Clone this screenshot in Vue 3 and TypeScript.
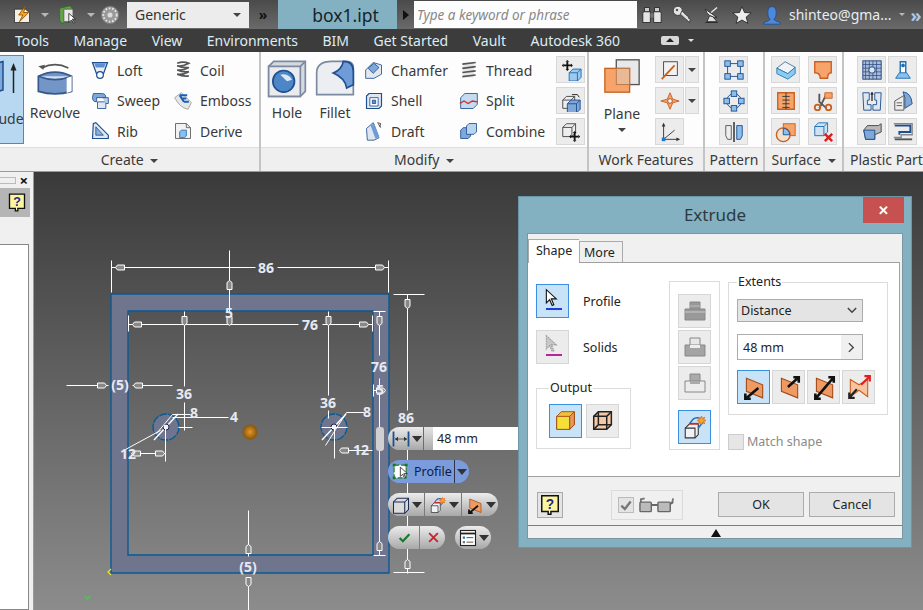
<script setup lang="ts">
type Tool = { label: string; icon: string };

const B = "#1d4f91";
const box = (x: number, y: number, s: number, fill = "#e4e8ee", stroke = B) =>
  `<path d="M${x} ${y + 4}l4-4h${s}v${s}l-4 4h-${s}z" fill="${fill}" stroke="${stroke}"/><path d="M${x} ${y + 4}h${s}v${s}M${x + s} ${y + 4}l4-4" fill="none" stroke="${stroke}"/>`;
const move = (x: number, y: number) =>
  `<path d="M${x - 4} ${y}h8M${x} ${y - 4}v8" stroke="#111" stroke-width="2"/><path d="M${x - 6} ${y}l2-2v4zM${x + 6} ${y}l-2-2v4zM${x} ${y - 6}l-2 2h4zM${x} ${y + 6}l-2-2h4z" fill="#111"/>`;
const arrowPair = (fill: string, line: string, d: string) =>
  `<path d="M5 4l15 6v12L5 16z" fill="${fill}" stroke="#a24b17"/><path d="${d}" stroke="${line}" stroke-width="2.400" fill="none"/>`;

const icons: Record<string, string> = {
  extrude: `<path d="M-3 3L4 1V20L-3 22z" fill="#7fa8d8" stroke="${B}"/><path d="M11 22V5" stroke="#222" stroke-width="1"/><path d="M11 2l-2 5h4z" fill="#222"/>`,
  revolve: `<path d="M4 6q8-4 16 0" fill="none" stroke="#555"/><path d="M2 5l4-1-1 3z" fill="#555"/><path d="M2 11q10-5 20 0v9q-10 3-20 0z" fill="#7396c6" stroke="#36588f"/><path d="M2 11q10 4 20 0" fill="#cfe0f0" stroke="#36588f"/><path d="M19 12l3-1v9l-3 1z" fill="#fff"/>`,
  loft: `<path d="M3 3h18l-5 14H8z" fill="#e8eef5" stroke="${B}" stroke-width="1.5"/><path d="M5 4h14l-2 5H7z" fill="#5f8fd0"/><circle cx="12" cy="18" r="4" fill="#fff" stroke="${B}" stroke-width="1.5"/>`,
  sweep: `<path d="M4 3h10q5 0 5 5H8v5q-5 0-5-5z" fill="#7fa8d8" stroke="${B}"/><path d="M9 13h10v8H9z" fill="#dfe7f1" stroke="${B}"/><path d="M15 8h7v7h-3" fill="#b8cee8" stroke="${B}"/>`,
  rib: `<path d="M4 3l3-1 15 15v4H3z" fill="#dfe7f1" stroke="${B}" stroke-width="1.4"/><path d="M7 7l9 10H7z" fill="#8fb0dc" stroke="${B}"/>`,
  coil: `<path d="M5 4q7-3 14 0-7 4-14 3 7 3 14 2-7 4-14 3 7 3 14 2-7 4-14 3 7 3 14 2" fill="none" stroke="#555" stroke-width="2"/>`,
  emboss: `<path d="M2 8l8-6 12 12-4 8q-10-2-16-14z" fill="#e6e6e6" stroke="#999"/><path d="M8 5h9M8 5l5 8M10 9h6M13 13h6" stroke="#1561b8" stroke-width="2.4"/>`,
  derive: `<path d="M3 3h13l5 5v13H3z" fill="#f2f2f2" stroke="#555"/><path d="M16 3v5h5" fill="none" stroke="#555"/><path d="M8 13l2-2h6v7l-2 2H8z" fill="#8cc0ea" stroke="#1a6fb5"/>`,
  hole: `<path d="M1 5l3-3h19v18l-3 3H1z" fill="#d6d9de" stroke="#7b8aa0"/><path d="M1 5h19v18H1z" fill="#e9ebee" stroke="#7b8aa0"/><path d="M20 5l3-3" stroke="#7b8aa0"/><circle cx="10" cy="14" r="6.5" fill="#4d86c6" stroke="${B}"/><path d="M8 10a6 6 0 0 1 7 3l-3 1z" fill="#d9e8f5"/>`,
  fillet: `<path d="M1 22V9q0-7 9-7h9q4 0 4 4v16z" fill="#eceef1" stroke="#7b8aa0"/><path d="M11 9q5-2 6-7 6 0 6 6v8l-4 2q-1-6-8-9z" fill="#6f9bd6" stroke="${B}"/>`,
  chamfer: `<path d="M2 12l9-9 10 3v11l-9 5H2z" fill="#e4e8ee" stroke="${B}"/><path d="M5 10l7-6 6 5-7 7z" fill="#7fa8d8" stroke="${B}"/>`,
  shell: `<path d="M3 6l3-3h15v15l-3 3H3z" fill="#dfe6f0" stroke="${B}" stroke-width="1.4"/><path d="M7 8h10v10H7z" fill="#fff" stroke="${B}"/><path d="M10 11h4v4h-4z" fill="#5f8fd0" stroke="${B}"/>`,
  draft: `<path d="M3 9l8-7 7 18-6 3H4z" fill="#dfe6f0" stroke="${B}"/><path d="M10 4l6 16" stroke="#6f9bd6" stroke-width="5"/><path d="M17 3l3 5M16 2l4 1-1 4" fill="none" stroke="#333"/>`,
  thread: `<path d="M5 3h13v18H5z" fill="#e8e8e8"/><path d="M4 5l16-2M4 10l16-2M4 15l16-2M4 20l16-2" stroke="#555" stroke-width="2"/>`,
  split: `<path d="M2 8l5-5h15v13l-5 5H2z" fill="#c5dbf0" stroke="${B}"/><path d="M1 15l5-3 5 3 5-3 6 1" fill="none" stroke="#cf2e2e" stroke-width="1.6"/>`,
  combine: `<path d="M2 11l3-3h9v10l-3 3H2z" fill="#7fa8d8" stroke="${B}"/><path d="M9 6l3-3h9v10l-3 3H9z" fill="#b8d4ee" stroke="${B}"/>`,
  mvface: `${move(8, 7)}${box(10, 11, 9, "#9cc9ee", "#1a6fb5")}`,
  copy: `${box(3, 7, 9, "#eee", "#444")}${box(8, 11, 10, "#7fa8d8", B)}<path d="M13 5h6l2 3" fill="none" stroke="#222"/>`,
  move3: `${box(3, 3, 10, "#eee", "#444")}${move(16, 17)}`,
  plane: `<rect x="15" y="3" width="24" height="26" fill="#e8e8ea" stroke="#555" stroke-width="1.4"/><rect x="3" y="12" width="26" height="25" fill="#f7a46b" stroke="#c8601f" stroke-width="1.4"/><rect x="15" y="12" width="14" height="17" fill="#e9b996" stroke="#b6774a"/>`,
  axis: `<rect x="5" y="3" width="15" height="15" fill="#f2f2f2" stroke="#444"/><path d="M3 22L17 7" stroke="#c8601f" stroke-width="2"/>`,
  point: `<path d="M12 3l3 7 7 2-7 2-3 7-3-7-7-2 7-2z" fill="#f7a46b" stroke="#c8601f"/><circle cx="12" cy="12" r="2.5" fill="#fff" stroke="#a24b17"/>`,
  ucs: `<path d="M5 3v17h17M5 20l12-10" fill="none" stroke="#333"/><path d="M3 6l2-4 2 4zM19 18l4 2-4 2z" fill="#333"/><rect x="3" y="18" width="4" height="4" fill="#2278c8"/>`,
  rect: `<path d="M5 5h14M5 19h14M5 5v14M19 5v14" stroke="${B}"/><rect x="2" y="2" width="6" height="6" fill="#8cc0ea" stroke="${B}"/><rect x="16" y="2" width="6" height="6" fill="#8cc0ea" stroke="${B}"/><rect x="2" y="16" width="6" height="6" fill="#8cc0ea" stroke="${B}"/><rect x="16" y="16" width="6" height="6" fill="#8cc0ea" stroke="${B}"/>`,
  circ: `<circle cx="12" cy="12" r="8" fill="none" stroke="${B}"/><rect x="9" y="1" width="6" height="6" fill="#8cc0ea" stroke="${B}"/><rect x="1" y="9" width="6" height="6" fill="#8cc0ea" stroke="${B}"/><rect x="17" y="9" width="6" height="6" fill="#8cc0ea" stroke="${B}"/><rect x="9" y="17" width="6" height="6" fill="#8cc0ea" stroke="${B}"/>`,
  mirror: `<path d="M12 1v22" stroke="#222" stroke-width="1.5"/><path d="M3 5h6v15H5l-2-4z" fill="#eee" stroke="#555"/><path d="M21 5h-6v15h4l2-4z" fill="#8cc0ea" stroke="${B}"/>`,
  thicken: `<path d="M2 10l9-7 11 6-8 7z" fill="#f0f4f8" stroke="#48789f"/><path d="M2 10v6l12 6 8-6v-7l-8 7z" fill="#8ccbee" stroke="#2b7fb8"/>`,
  patch: `<path d="M3 3h18v12q-4 0-4 6H9q0-6-6-6z" fill="#f7a46b" stroke="#c8601f" stroke-width="1.5"/>`,
  stitch: `<path d="M3 3h18v18H3z" fill="#f7a46b" stroke="#c8601f" stroke-width="1.5"/><path d="M12 3v18M8 7h8M8 11h8M8 15h8M8 19h8" stroke="#333"/>`,
  trim: `<path d="M8 4v9l8 7M16 4l-8 16" stroke="#555" stroke-width="2" fill="none"/><circle cx="6" cy="19" r="3" fill="none" stroke="#c8601f" stroke-width="2"/><circle cx="18" cy="19" r="3" fill="none" stroke="#c8601f" stroke-width="2"/><path d="M14 3h8v6h-8z" fill="#f7a46b" stroke="#c8601f"/>`,
  sculpt: `<rect x="9" y="3" width="13" height="13" fill="#f7a46b" stroke="#c8601f"/><circle cx="9" cy="15" r="7.5" fill="#f2e0d0" stroke="#c8601f" stroke-width="1.5"/><path d="M9 8a7 7 0 0 1 7 7H9z" fill="#8cc0ea" stroke="${B}"/>`,
  delface: `${box(3, 2, 10, "#cfe2f3", "#1a6fb5")}<path d="M14 14l8 8M22 14l-8 8" stroke="#d82222" stroke-width="2.6"/>`,
  grill: `<rect x="2" y="2" width="20" height="20" fill="#a9bdd8" stroke="#1d3f78"/><path d="M5 2v20M9 2v20M13 2v20M17 2v20M2 6h20M2 10h20M2 14h20M2 18h20" stroke="#2a4a85" stroke-width=".8"/><circle cx="12" cy="12" r="3.5" fill="#dbe6f2" stroke="#1d3f78"/>`,
  boss: `<path d="M9 3h6v13H9z" fill="#fff" stroke="#1a6fb5" stroke-width="1.5"/><path d="M4 21h16l-4-6H8z" fill="#8cc0ea" stroke="#1a6fb5"/><circle cx="12" cy="7" r="2" fill="#1a6fb5"/>`,
  lip: `<path d="M2 3h7v8H7v5h4v6H3zM22 3h-7v8h2v5h-4v6h8z" fill="#dfe6f0" stroke="${B}"/><path d="M12 12V3" stroke="#222" stroke-width="1.4"/><path d="M10 5l2-3 2 3z" fill="#222"/>`,
  rest: `<path d="M12 2q9 1 10 13l-8 5V8z" fill="#7fa8d8" stroke="${B}"/><path d="M3 12l10-6v16H3z" fill="#eee" stroke="#555"/><path d="M5 14h6M5 17h6" stroke="#555"/>`,
  snapfit: `<path d="M3 10l4-5h12l3-2v9l-7 3v5H5z" fill="#b8b8b8" stroke="#444"/><path d="M3 10h12v10H5z" fill="#7fa8d8" stroke="${B}"/>`,
  rule: `<path d="M2 3h20v12H10v3H2" fill="none" stroke="#888" stroke-width="1.5"/><path d="M3 5h17v7H8v3" fill="none" stroke="${B}" stroke-width="2"/><path d="M3 20h19" stroke="#555" stroke-width="2"/>`,
  bolt: `<path d="M3 5h13l5 4v12H3z" fill="#f3efe3" stroke="#333"/><path d="M16 1L8 12h5l-4 8 11-11h-6z" fill="#f5a623" stroke="#8a4b00"/>`,
  file: `<path d="M2 4l12-3 3 3v15l-12 3-3-3z" fill="#62a24a" stroke="#2f6a22"/><path d="M7 5h11v15H7z" fill="#e8e8e8" stroke="#555"/><path d="M13 10v11l3-3 3 4 1-1-3-4h4z" fill="#fff" stroke="#222"/>`,
  disc: `<circle cx="12" cy="12" r="10.5" fill="#999" stroke="#777"/><circle cx="12" cy="12" r="8" fill="none" stroke="#e8e8e8" stroke-width="2.2" stroke-dasharray="2 2"/><circle cx="12" cy="12" r="3" fill="#ddd"/>`,
  binoc: `<path d="M2 8h8v13H1V10zM14 8h8l1 2v11h-9z" fill="#e6e6e6" stroke="#222"/><path d="M3 3h6v5H3zM15 3h6v5h-6z" fill="#ccc" stroke="#222"/><path d="M10 10h4v5h-4z" fill="#777"/>`,
  key: `<circle cx="7" cy="7" r="5.5" fill="#e4e4e4" stroke="#333"/><path d="M10 11l11 10 1-4-2-1 0-2-2-1-6-6z" fill="#ddd" stroke="#333"/><circle cx="6" cy="6" r="1.5" fill="#555"/>`,
  dish: `<path d="M4 5q3 10 14 10z" fill="#eee" stroke="#222"/><path d="M11 9l7-6" stroke="#eee" stroke-width="1.5"/><path d="M9 13l-3 7h12l-5-6zM4 21h15" fill="#ddd" stroke="#222"/>`,
  star: `<path d="M12 2l3 7 8 .5-6 5 2 7.5-7-4-7 4 2-7.5-6-5 8-.5z" fill="#eee" stroke="#222"/>`,
  user: `<path d="M12 2q5 0 5 7t-3 8q1 2 8 4v2H2v-2q7-2 8-4-3-1-3-8t5-7z" fill="#4d88dc" stroke="#1d4f91"/>`,
  cursor: `<path d="M4 2v16l4-4 3 7 2-1-3-7h6z" fill="#fff" stroke="#111" stroke-width="1.3"/>`,
  cursorDim: `<path d="M4 2v16l4-4 3 7 2-1-3-7h6z" fill="#c8c8c8" stroke="#999" stroke-width="1.3" stroke-dasharray="2 1"/>`,
  solid: `<path d="M4 9l5-5h14v14l-5 5H4z" fill="#f0c23a" stroke="#a24b17"/><path d="M4 9h14v14H4z" fill="#f7df3a" stroke="#a24b17"/><path d="M18 9l5-5v14l-5 5z" fill="#e69a55" stroke="#a24b17"/>`,
  surf: `<path d="M4 9l5-5h14v14l-5 5H4z" fill="#f5c9a5" stroke="#222" stroke-width="1.6"/><path d="M9 4v14h14M9 18l-5 5M4 9h14v14M18 9l5-5" fill="none" stroke="#222" stroke-width="1.6"/>`,
  press1: `<path d="M8 2h10v9H8z" fill="#999" stroke="#888"/><path d="M8 6h10" stroke="#bbb"/><path d="M3 9h20v11H3z" fill="#999" stroke="#888"/><path d="M3 12h20" stroke="#ccc"/>`,
  press2: `<path d="M8 2h10v9H8z" fill="#e8e8e8" stroke="#888"/><path d="M3 9h20v11H3z" fill="#a4a4a4" stroke="#888"/><path d="M8 9h10v3H8z" fill="#eee"/>`,
  press3: `<path d="M8 2h10v9H8z" fill="#aaa" stroke="#888"/><path d="M3 9h20v11H3z" fill="#ececec" stroke="#888"/><path d="M8 9h10v3H8z" fill="#aaa"/>`,
  iso: `<path d="M3 13l4-4h8v10l-3 3H3z" fill="#f0f2f5" stroke="#333"/><path d="M3 13h9v9" fill="none" stroke="#333"/><path d="M7 9l3-4q4-3 8 0l1 3-4 5" fill="none" stroke="#1a6fb5" stroke-width="1.4"/><path d="M7 9h8" stroke="#e02020" stroke-width="1.6"/><path d="M18 2l1 2 2-1-1 2 2 1-2 1 1 2-2-1-1 2-1-2-2 1 1-2-2-1 2-1-1-2 2 1z" fill="#f5a623" stroke="#d4521a" stroke-width=".6"/>`,
  dir1: arrowPair("#ef9a63", "#111", "M16 13L4 23M4 18v5h5"),
  dir2: arrowPair("#ef9a63", "#111", "M11 12L21 3M16 3h5v5"),
  dir3: arrowPair("#ef9a63", "#111", "M4 23L21 3M4 18v5h5M16 3h5v5"),
  dir4: `<path d="M4 5l8 5 8-5v16l-8-6-8 6z" fill="#f7c4a0" stroke="#c8601f"/><path d="M14 10l8-8M17 2h5v5" stroke="#e02020" stroke-width="2" fill="none"/><path d="M10 14l-7 8M3 17v5h5" stroke="#222" stroke-width="2" fill="none"/>`,
  glasses: `<path d="M2 6v-3l4-1M36 2l-1 5" fill="none" stroke="#777" stroke-width="2"/><rect x="1" y="6" width="12" height="10" rx="1" fill="#bbb" stroke="#666" stroke-width="1.5"/><rect x="20" y="6" width="13" height="10" rx="1" fill="#bbb" stroke="#666" stroke-width="1.5"/><path d="M13 9h7M33 8l3-2" stroke="#666" stroke-width="2"/>`,
  help: `<path d="M3 2h18v17h-8v3h-3v-3H3z" fill="#fdf6a0" stroke="#111" stroke-width="1.6"/><text x="12" y="16" text-anchor="middle" font-family="Liberation Sans" font-weight="700" font-size="15" fill="#25258a">?</text>`,
  dim: `<path d="M2 2v20M22 2v20" stroke="${B}" stroke-width="2.4"/><path d="M4 12h16" stroke="#333"/><path d="M4 12l4-3v6zM20 12l-4-3v6z" fill="#333"/>`,
  profile: `<rect x="3" y="3" width="17" height="18" fill="#fff" stroke="#177a17" stroke-width="1.5" stroke-dasharray="7 3"/><rect x="1" y="1" width="4" height="4" fill="#177a17"/><rect x="18" y="1" width="4" height="4" fill="#177a17"/><rect x="1" y="19" width="4" height="4" fill="#177a17"/>`,
  opface: `<path d="M2 8l5-5h15v15l-5 5H2z" fill="#dcdcdc" stroke="#1c2d54" stroke-width="1.4"/><path d="M2 8h15v15M17 8l5-5" fill="none" stroke="#1c2d54" stroke-width="1.4"/>`,
  check: `<path d="M3 13l6 6L21 6" fill="none" stroke="#177a2c" stroke-width="4"/>`,
  cross: `<path d="M4 4l16 16M20 4L4 20" stroke="#c8232c" stroke-width="3.4"/>`,
  list: `<rect x="2" y="2" width="20" height="20" fill="#fff" stroke="#222" stroke-width="1.5"/><path d="M2 6h20" stroke="#222" stroke-width="2.4"/><rect x="5" y="10" width="3" height="3" fill="#2278c8"/><rect x="5" y="16" width="3" height="3" fill="#777"/><path d="M10 11.500h9M10 17.500h9" stroke="#222"/>`,
};

const createCol1: Tool[] = [
  { label: "Loft", icon: "loft" },
  { label: "Sweep", icon: "sweep" },
  { label: "Rib", icon: "rib" },
];
const createCol2: Tool[] = [
  { label: "Coil", icon: "coil" },
  { label: "Emboss", icon: "emboss" },
  { label: "Derive", icon: "derive" },
];
const modifyCol1: Tool[] = [
  { label: "Chamfer", icon: "chamfer" },
  { label: "Shell", icon: "shell" },
  { label: "Draft", icon: "draft" },
];
const modifyCol2: Tool[] = [
  { label: "Thread", icon: "thread" },
  { label: "Split", icon: "split" },
  { label: "Combine", icon: "combine" },
];
const modifyBtns = ["mvface", "copy", "move3"];
const patternBtns = ["rect", "circ", "mirror"];
const surfaceBtns = ["thicken", "patch", "stitch", "trim", "sculpt", "delface"];
const plasticBtns = ["grill", "boss", "lip", "rest", "snapfit", "rule"];
const menus = ["Tools", "Manage", "View", "Environments", "BIM", "Get Started", "Vault", "Autodesk 360"];
const topIcons = ["binoc", "key", "dish", "star", "user"];
const dirIcons = ["dir1", "dir2", "dir3", "dir4"];

// white sketch dimensions, in page coordinates
const dimLines = [
  "M111 260V292M388 260V292M111 267H255M277 267H388",
  "M229 250V311M128 315V331M372 315V331M128 324H298M322 324H372",
  "M184 311V386M328 311V395M184 402V430M328 410V418",
  "M379 311V355M379 378V555M373 311H385M373 555H385M373 384V396M373 390H376",
  "M393 294H424M393 572H424M407 294V410M407 428V573",
  "M66 385H108M132 385H172",
  "M248 510V556M248 578V610",
  "M172 414H190M172 417H228M178 427H192M165 427V461M135 453H165M125 449L160 430M156 433L172 414",
  "M334 427V458M340 450H350M340 450H372M364 412H346L325 445M321 427H347",
];
const arrows = [
  { x: 120, y: 267, r: 0 }, { x: 379, y: 267, r: 180 }, { x: 229, y: 285, r: 90 }, { x: 229, y: 320, r: -90 },
  { x: 137, y: 324, r: 0 }, { x: 363, y: 324, r: 180 }, { x: 184, y: 320, r: -90 }, { x: 328, y: 320, r: -90 },
  { x: 379, y: 320, r: -90 }, { x: 379, y: 546, r: 90 }, { x: 407, y: 303, r: -90 }, { x: 407, y: 564, r: 90 },
  { x: 101, y: 385, r: 180 }, { x: 138, y: 385, r: 0 }, { x: 248, y: 549, r: 90 }, { x: 248, y: 581, r: -90 },
  { x: 159, y: 453, r: 180 }, { x: 136, y: 453, r: 0 }, { x: 344, y: 450, r: 0 }, { x: 380, y: 390, r: 180 },
];
const labels = [
  { t: "86", x: 266, y: 273 }, { t: "5", x: 229, y: 318 }, { t: "76", x: 310, y: 330 }, { t: "76", x: 379, y: 372 },
  { t: "5", x: 380, y: 395 }, { t: "86", x: 406, y: 423 }, { t: "36", x: 184, y: 399 }, { t: "36", x: 328, y: 408 },
  { t: "8", x: 194, y: 418 }, { t: "4", x: 234, y: 422 }, { t: "8", x: 367, y: 417 }, { t: "12", x: 128, y: 459 },
  { t: "12", x: 361, y: 455 }, { t: "(5)", x: 120, y: 390 }, { t: "(5)", x: 248, y: 572 },
];
</script>

<template>
  <div class="app">
    <header class="titlebar">
      <svg class="ti first" viewBox="0 0 24 24" v-html="icons.bolt"></svg>
      <i class="caret"></i>
      <svg class="ti" viewBox="0 0 24 24" v-html="icons.file"></svg>
      <i class="caret"></i>
      <svg class="ti disc" viewBox="0 0 24 24" v-html="icons.disc"></svg>
      <div class="generic"><span>Generic</span><i class="caret dark"></i></div>
      <div class="more-btn">»</div>
      <div class="doc-tab">box1.ipt</div>
      <div class="play-btn"></div>
      <div class="search">Type a keyword or phrase</div>
      <div class="top-icons">
        <svg v-for="name in topIcons" :key="name" viewBox="0 0 24 24" v-html="icons[name]"></svg>
      </div>
      <span class="account">shinteo@gma...</span>
      <i class="caret"></i>
      <span class="more-right">»</span>
    </header>

    <nav class="menubar">
      <span v-for="m in menus" :key="m">{{ m }}</span>
      <span class="ribbon-toggle"><b></b></span>
      <i class="caret light"></i>
    </nav>

    <div class="ribbon">
      <section class="panel create">
        <div class="panel-body">
          <div class="big-tool active">
            <svg viewBox="0 0 18 24" class="ext-icon" v-html="icons.extrude"></svg>
            <span>Extrude</span>
          </div>
          <div class="big-tool revolve">
            <svg viewBox="0 0 24 24" v-html="icons.revolve"></svg>
            <span>Revolve</span>
          </div>
          <div class="tool-col col-loft">
            <div v-for="t in createCol1" :key="t.label" class="tool">
              <svg viewBox="0 0 24 24" v-html="icons[t.icon]"></svg>{{ t.label }}
            </div>
          </div>
          <div class="tool-col">
            <div v-for="t in createCol2" :key="t.label" class="tool">
              <svg viewBox="0 0 24 24" v-html="icons[t.icon]"></svg>{{ t.label }}
            </div>
          </div>
        </div>
        <div class="panel-label">Create <i class="caret dark"></i></div>
      </section>

      <section class="panel modify">
        <div class="panel-body">
          <div class="big-tool hole">
            <svg viewBox="0 0 24 24" v-html="icons.hole"></svg>
            <span>Hole</span>
          </div>
          <div class="big-tool hole">
            <svg viewBox="0 0 24 24" v-html="icons.fillet"></svg>
            <span>Fillet</span>
          </div>
          <div class="tool-col col-chamfer">
            <div v-for="t in modifyCol1" :key="t.label" class="tool">
              <svg viewBox="0 0 24 24" v-html="icons[t.icon]"></svg>{{ t.label }}
            </div>
          </div>
          <div class="tool-col col-thread">
            <div v-for="t in modifyCol2" :key="t.label" class="tool">
              <svg viewBox="0 0 24 24" v-html="icons[t.icon]"></svg>{{ t.label }}
            </div>
          </div>
          <div class="btn-col">
            <div v-for="name in modifyBtns" :key="name" class="rbtn">
              <svg viewBox="0 0 24 24" v-html="icons[name]"></svg>
            </div>
          </div>
        </div>
        <div class="panel-label">Modify <i class="caret dark"></i></div>
      </section>

      <section class="panel work">
        <div class="panel-body">
          <div class="big-tool plane">
            <svg viewBox="0 0 42 40" v-html="icons.plane"></svg>
            <span>Plane</span>
            <i class="caret dark"></i>
          </div>
          <div class="btn-col">
            <div class="split-btn">
              <div class="rbtn"><svg viewBox="0 0 24 24" v-html="icons.axis"></svg></div>
              <div class="rbtn arrow"><i class="caret dark"></i></div>
            </div>
            <div class="split-btn">
              <div class="rbtn"><svg viewBox="0 0 24 24" v-html="icons.point"></svg></div>
              <div class="rbtn arrow"><i class="caret dark"></i></div>
            </div>
            <div class="rbtn"><svg viewBox="0 0 24 24" v-html="icons.ucs"></svg></div>
          </div>
        </div>
        <div class="panel-label">Work Features</div>
      </section>

      <section class="panel pattern">
        <div class="panel-body">
          <div class="btn-col">
            <div v-for="name in patternBtns" :key="name" class="rbtn">
              <svg viewBox="0 0 24 24" v-html="icons[name]"></svg>
            </div>
          </div>
        </div>
        <div class="panel-label">Pattern</div>
      </section>

      <section class="panel surface">
        <div class="panel-body">
          <div class="btn-grid wide">
            <div v-for="name in surfaceBtns" :key="name" class="rbtn">
              <svg viewBox="0 0 24 24" v-html="icons[name]"></svg>
            </div>
          </div>
        </div>
        <div class="panel-label">Surface <i class="caret dark"></i></div>
      </section>

      <section class="panel plastic">
        <div class="panel-body">
          <div class="btn-grid">
            <div v-for="name in plasticBtns" :key="name" class="rbtn">
              <svg viewBox="0 0 24 24" v-html="icons[name]"></svg>
            </div>
          </div>
        </div>
        <div class="panel-label left">Plastic Part</div>
      </section>
    </div>

    <main class="workspace">
      <aside class="side">
        <div class="side-head"><span class="grip"></span><span class="side-x">×</span></div>
        <div class="side-help">
          <svg viewBox="0 0 24 24" v-html="icons.help"></svg>
        </div>
        <div class="side-list"></div>
      </aside>

      <div class="canvas">
        <svg class="sketch" viewBox="34 172 889 438">
          <path d="M111 294H389V573H111ZM128 311V555H373V311Z" fill="#6f758c" fill-rule="evenodd" stroke="#0a5a96" stroke-width="1.4" />
          <g v-for="cx in [166, 334]" :key="cx">
            <circle :cx="cx" cy="427" r="13" fill="#6f758c" stroke="#0a5a96" stroke-width="1.4" stroke-dasharray="8 1" />
            <path :d="`M${cx - 12} 440L${cx + 12} 414`" stroke="#fff" stroke-width="1.4" />
            <circle :cx="cx" cy="427" r="3" fill="#eef" stroke="#224" />
          </g>
          <radialGradient id="gate">
            <stop offset="0" stop-color="#e09a2b" />
            <stop offset="1" stop-color="#8a5208" />
          </radialGradient>
          <circle cx="250" cy="432" r="7.500" fill="url(#gate)" />
          <g transform="translate(.5 .5)">
            <path v-for="(d, i) in dimLines" :key="i" :d="d" fill="none" stroke="#fff" stroke-width="1" />
            <path
              v-for="(a, i) in arrows"
              :key="'a' + i"
              d="M-4 -2.500H3L5 0L3 2.500H-4Z"
              :transform="`translate(${a.x} ${a.y}) rotate(${a.r + 180})`"
              fill="#888"
              stroke="#fff"
              stroke-width="1"
            />
          </g>
          <text v-for="(l, i) in labels" :key="'t' + i" class="dim-text" :x="l.x" :y="l.y" text-anchor="middle">{{ l.t }}</text>
          <path d="M111 569L108 572L111 575" fill="none" stroke="#f0e020" stroke-width="1.2" />
          <path d="M85 596L87.500 599L90 596" fill="none" stroke="#3fd13f" stroke-width="1.4" />
        </svg>

        <div class="minibar">
          <div class="mini-row first-row">
            <span class="grip-handle"></span>
            <div class="pill dim-pill">
              <svg viewBox="0 0 24 24" v-html="icons.dim"></svg><i class="caret dark"></i>
            </div>
            <div class="value-box"><input value="48 mm" /></div>
          </div>
          <div class="mini-row">
            <div class="pill profile-pill">
              <svg viewBox="0 0 24 24" v-html="icons.profile"></svg>
              <svg class="pill-cursor" viewBox="0 0 24 24" v-html="icons.cursor"></svg>
              <span>Profile</span>
              <i class="divider"></i>
              <i class="caret dark"></i>
            </div>
          </div>
          <div class="mini-row join">
            <div class="pill lead">
              <svg viewBox="0 0 24 24" v-html="icons.opface"></svg><i class="caret dark"></i>
            </div>
            <div class="pill mid">
              <svg viewBox="0 0 24 24" v-html="icons.iso"></svg><i class="caret dark"></i>
            </div>
            <div class="pill tail">
              <svg viewBox="0 0 24 24" v-html="icons.dir1"></svg><i class="caret dark"></i>
            </div>
          </div>
          <div class="mini-row join">
            <div class="pill lead ok"><svg viewBox="0 0 24 24" v-html="icons.check"></svg></div>
            <div class="pill tail cancel"><svg viewBox="0 0 24 24" v-html="icons.cross"></svg></div>
            <div class="pill both">
              <svg viewBox="0 0 24 24" v-html="icons.list"></svg><i class="caret dark"></i>
            </div>
          </div>
        </div>

        <div class="dialog">
          <div class="dlg-title">
            <span>Extrude</span>
            <div class="dlg-close">✕</div>
          </div>
          <div class="dlg-body">
            <div class="tabs">
              <div class="tab on">Shape</div>
              <div class="tab">More</div>
            </div>
            <div class="pane">
              <div class="pane-left">
                <div class="select-row">
                  <div class="tbtn sel">
                    <svg viewBox="0 0 24 24" v-html="icons.cursor"></svg><i class="under blue"></i>
                  </div>
                  <span>Profile</span>
                </div>
                <div class="select-row">
                  <div class="tbtn">
                    <svg viewBox="0 0 24 24" v-html="icons.cursorDim"></svg><i class="under pink"></i>
                  </div>
                  <span>Solids</span>
                </div>
                <fieldset class="group output">
                  <legend>Output</legend>
                  <div class="tbtn sel"><svg viewBox="0 0 28 28" v-html="icons.solid"></svg></div>
                  <div class="tbtn"><svg viewBox="0 0 28 28" v-html="icons.surf"></svg></div>
                </fieldset>
              </div>

              <div class="pane-mid">
                <div class="tbtn press"><svg viewBox="0 0 26 22" v-html="icons.press1"></svg></div>
                <div class="tbtn press"><svg viewBox="0 0 26 22" v-html="icons.press2"></svg></div>
                <div class="tbtn press"><svg viewBox="0 0 26 22" v-html="icons.press3"></svg></div>
                <div class="tbtn sel iso-btn"><svg viewBox="0 0 24 24" v-html="icons.iso"></svg></div>
              </div>

              <div class="pane-right">
                <fieldset class="group extents">
                  <legend>Extents</legend>
                  <div class="select-box">
                    <span>Distance</span>
                    <svg viewBox="0 0 12 8"><path d="M1 1l5 5 5-5" fill="none" stroke="#444" stroke-width="1.800" /></svg>
                  </div>
                  <div class="distance">
                    <span>48 mm</span>
                    <b><svg viewBox="0 0 8 12"><path d="M1 1l5 5-5 5" fill="none" stroke="#444" stroke-width="1.600" /></svg></b>
                  </div>
                  <div class="dirs">
                    <div v-for="(name, i) in dirIcons" :key="name" class="tbtn" :class="{ sel: i === 0 }">
                      <svg viewBox="0 0 24 24" v-html="icons[name]"></svg>
                    </div>
                  </div>
                </fieldset>
                <label class="match"><i></i>Match shape</label>
              </div>
            </div>

            <div class="dlg-foot">
              <div class="help-btn"><svg viewBox="0 0 24 24" v-html="icons.help"></svg></div>
              <div class="preview">
                <span class="check-box"><svg viewBox="0 0 24 24"><path d="M4 13l6 6L20 6" fill="none" stroke="#777" stroke-width="4" /></svg></span>
                <svg class="glasses" viewBox="0 0 38 18" v-html="icons.glasses"></svg>
              </div>
              <button class="push ok-btn">OK</button>
              <button class="push">Cancel</button>
            </div>
            <div class="dlg-strip"><i></i></div>
          </div>
        </div>
      </div>
    </main>
  </div>
</template>

<style>
html,
body {
  margin: 0;
  background: #3a3a3a;
}
</style>

<style scoped>
.app {
  width: 923px;
  height: 610px;
  overflow: hidden;
  display: flex;
  flex-direction: column;
  font-family: "Noto Sans", sans-serif;
  font-size: 14px;
  color: #3a3a3a;
}

.caret {
  display: inline-block;
  flex: none;
  width: 0;
  height: 0;
  border-left: 4px solid transparent;
  border-right: 4px solid transparent;
  border-top: 4px solid #b8b8b8;
}
.caret.dark {
  border-top-color: #444;
}
.caret.light {
  border-top-color: #e0e0e0;
}

/* title bar */
.titlebar {
  height: 29px;
  flex: none;
  display: flex;
  align-items: center;
  background: linear-gradient(#4a4a4a, #6a6a6a);
  color: #e6eef2;
}
.ti {
  width: 20px;
  height: 20px;
  flex: none;
}
.ti.first {
  margin-left: 12px;
}
.titlebar .caret {
  margin: 0 9px;
}
.ti.disc {
  margin-left: -4px;
}
.generic {
  width: 122px;
  height: 26px;
  flex: none;
  margin-left: 7px;
  padding: 0 8px;
  box-sizing: border-box;
  background: #ececec;
  color: #333;
  display: flex;
  align-items: center;
  justify-content: space-between;
}
.titlebar .generic .caret {
  margin: 0;
}
.more-btn {
  width: 24px;
  flex: none;
  margin: 0 3px 0 2px;
  text-align: center;
  color: #111;
  font-weight: 700;
}
.doc-tab {
  width: 119px;
  height: 29px;
  flex: none;
  box-sizing: border-box;
  padding-left: 16px;
  background: #84b1c1;
  color: #15232a;
  font-size: 17.500px;
  line-height: 31px;
  text-align: center;
}
.play-btn {
  width: 16px;
  height: 26px;
  flex: none;
  margin-left: 1px;
  position: relative;
}
.play-btn::after {
  content: "";
  position: absolute;
  left: 5px;
  top: 8px;
  border-left: 6px solid #111;
  border-top: 5px solid transparent;
  border-bottom: 5px solid transparent;
}
.search {
  width: 223px;
  height: 27px;
  flex: none;
  box-sizing: border-box;
  background: #fdfdfd;
  color: #888;
  font-style: italic;
  font-size: 13.500px;
  line-height: 28px;
  padding-left: 3px;
}
.top-icons {
  display: flex;
  flex: none;
  gap: 10px;
  margin-left: 5px;
}
.top-icons svg {
  width: 20px;
  height: 20px;
  flex: none;
}
.account {
  margin-left: 7px;
  font-size: 14px;
  white-space: nowrap;
}
.titlebar .account + .caret {
  margin: 0 0 0 8px;
  border-width: 3px;
}
.more-right {
  margin-left: 5px;
  color: #a8c8e8;
  font-weight: 700;
  font-size: 18px;
  line-height: 1;
}

/* menu bar */
.menubar {
  height: 23px;
  flex: none;
  display: flex;
  align-items: center;
  gap: 24.500px;
  padding-left: 15px;
  background: #3c3c3c;
  color: #dcecf4;
}
.ribbon-toggle {
  margin-left: 16px;
  width: 18px;
  height: 9px;
  background: #d8d8d8;
  border-radius: 2px;
  position: relative;
}
.ribbon-toggle b {
  position: absolute;
  left: 5px;
  top: 2px;
  border-left: 4px solid transparent;
  border-right: 4px solid transparent;
  border-bottom: 4px solid #222;
}
.menubar .caret {
  margin-left: -15px;
  border-width: 3px;
}

/* ribbon */
.ribbon {
  height: 120px;
  flex: none;
  display: flex;
  background: #fdfdfd;
  border-bottom: 1px solid #999;
  box-sizing: border-box;
}
.panel {
  flex: none;
  display: flex;
  flex-direction: column;
  border-right: 2px solid #c4c4c4;
  box-sizing: border-box;
}
.create {
  width: 261px;
}
.modify {
  width: 328px;
}
.work {
  width: 116px;
}
.pattern {
  width: 60px;
}
.surface {
  width: 79px;
}
.plastic {
  flex: 1;
  border-right: 0;
}
.panel-body {
  flex: 1;
  display: flex;
  min-height: 0;
}
.panel-label {
  height: 23px;
  flex: none;
  background: #efefef;
  border-top: 1px solid #ddd;
  text-align: center;
  line-height: 24px;
  white-space: nowrap;
  overflow: hidden;
}
.panel-label .caret {
  margin-left: 3px;
  vertical-align: 2px;
}
.panel-label.left {
  text-align: left;
  padding-left: 6px;
}

.big-tool {
  flex: none;
  display: flex;
  flex-direction: column;
  align-items: center;
  box-sizing: border-box;
  padding-top: 6px;
}
.big-tool svg {
  width: 40px;
  height: 40px;
  flex: none;
}
.big-tool span {
  margin-top: 5px;
}
.big-tool.active {
  width: 52px;
  height: 89px;
  margin: 3px 0 0 -28px;
  background: #b8d8f2;
  border: 1px solid #3a8fd0;
}
.big-tool.active .ext-icon {
  margin: -2px 0 0 24px;
  height: 36px;
  width: 27px;
  overflow: visible;
}
.big-tool.active span {
  margin-top: 13px;
}
.big-tool.revolve {
  width: 58px;
  margin-left: 2px;
}
.big-tool.hole {
  width: 48px;
}
.big-tool.hole:first-child {
  margin-left: 2px;
}
.big-tool.plane {
  width: 66px;
  margin-left: 0;
  padding-top: 4px;
}
.big-tool.plane span {
  margin-top: 8px;
}
.big-tool.plane .caret {
  margin-top: 5px;
}
.tool-col {
  display: flex;
  flex-direction: column;
  padding-top: 3px;
  margin-left: 6px;
  width: 83px;
}
.col-loft {
  width: 77px;
}
.col-chamfer {
  width: 95px;
  margin-left: 5px;
}
.col-thread {
  width: 97px;
  margin-left: 0;
}
.tool {
  height: 30.500px;
  display: flex;
  align-items: center;
  gap: 7px;
  white-space: nowrap;
}
.tool svg {
  width: 20px;
  height: 20px;
  flex: none;
}
.btn-col {
  display: flex;
  flex-direction: column;
  gap: 4px;
  padding-top: 4px;
}
.rbtn {
  width: 29px;
  height: 27px;
  box-sizing: border-box;
  background: #ececec;
  border: 1px solid #d8d8d8;
  display: flex;
  align-items: center;
  justify-content: center;
}
.rbtn svg {
  width: 22px;
  height: 22px;
  flex: none;
}
.split-btn {
  display: flex;
  gap: 1px;
}
.rbtn.arrow {
  width: 14px;
}
.panel.pattern .btn-col {
  margin-left: 14px;
}
.btn-grid {
  display: grid;
  grid-template-columns: 29px 29px;
  grid-auto-rows: 27px;
  column-gap: 2px;
  row-gap: 4px;
  padding: 4px 0 0 13px;
}
.btn-grid.wide {
  column-gap: 8px;
  padding-left: 6px;
}

/* workspace */
.workspace {
  flex: 1;
  min-height: 0;
  display: flex;
}
.side {
  width: 34px;
  flex: none;
  display: flex;
  flex-direction: column;
  background: #f0f0f0;
  border-right: 1px solid #9a9a9a;
  box-sizing: border-box;
}
.side-head {
  height: 16px;
  display: flex;
  align-items: center;
  justify-content: space-between;
  padding-right: 5px;
}
.grip {
  width: 15px;
  height: 5px;
  border: 1px solid #bbb;
  border-left: 0;
}
.side-x {
  font-weight: 700;
  color: #111;
  line-height: 1;
  font-size: 15px;
}
.side-help {
  height: 29px;
  width: 30px;
  background: #b5b5b5;
  display: flex;
  align-items: center;
  justify-content: flex-end;
}
.side-help svg {
  width: 20px;
  height: 21px;
  margin-right: 3px;
}
.side-list {
  width: 29px;
  height: 366px;
  margin-top: 27px;
  background: #fff;
  border: 1px solid #888;
  border-left: 0;
  box-sizing: border-box;
}
.canvas {
  flex: 1;
  position: relative;
  background: linear-gradient(#3a3a3a, #8c8c8c);
  overflow: hidden;
}
.sketch {
  display: block;
  width: 100%;
  height: 100%;
}
.dim-text {
  font-family: "Noto Sans", sans-serif;
  font-weight: 700;
  font-size: 14px;
  fill: #e6e9f5;
}

/* floating mini toolbar */
.minibar {
  position: absolute;
  left: 342px;
  top: 255px;
  display: flex;
  flex-direction: column;
  gap: 10px;
}
.mini-row {
  display: flex;
  align-items: center;
  height: 23px;
  padding-left: 12px;
}
.mini-row.first-row {
  padding-left: 0;
}
.mini-row.join {
  gap: 1px;
}
.grip-handle {
  width: 8px;
  height: 24px;
  margin-right: 4px;
  border-radius: 3px;
  background: #d0d0d0;
}
.pill {
  height: 23px;
  box-sizing: border-box;
  display: flex;
  align-items: center;
  gap: 2px;
  padding: 0 3px 0 4px;
  background: linear-gradient(#ececec, #a8a8a8);
}
.pill svg {
  width: 18px;
  height: 18px;
  flex: none;
}
.pill .caret {
  border-left-width: 5px;
  border-right-width: 5px;
  border-top-width: 6px;
  border-top-color: #333;
}
.dim-pill {
  width: 35px;
  border-radius: 12px 0 0 12px;
}
.value-box {
  width: 94px;
  height: 23px;
  margin-left: 1px;
  padding-left: 9px;
  box-sizing: border-box;
  background: linear-gradient(#e4e4e4, #aaa);
}
.value-box input {
  width: 100%;
  height: 100%;
  padding: 0 0 0 4px;
  margin: 0;
  border: 0;
  box-sizing: border-box;
  background: #fff;
  font-family: inherit;
  font-size: 12.500px;
  color: #222;
}
.profile-pill {
  width: 81px;
  padding: 0 4px;
  background: #7a9cdc;
  border-radius: 12px;
  position: relative;
  color: #111c3c;
  font-size: 12.500px;
}
.profile-pill svg {
  width: 17px;
  height: 17px;
}
.profile-pill span {
  margin-left: 3px;
}
.profile-pill .pill-cursor {
  position: absolute;
  left: 10px;
  top: 6px;
  width: 14px;
  height: 14px;
}
.divider {
  width: 1px;
  height: 23px;
  flex: none;
  background: #334;
}
.lead {
  width: 36px;
  border-radius: 12px 0 0 12px;
}
.mid {
  width: 36px;
}
.tail {
  width: 36px;
  border-radius: 0 12px 12px 0;
}
.both {
  width: 36px;
  margin-left: 9px;
  border-radius: 12px;
}
.ok {
  width: 31px;
  justify-content: center;
}
.cancel {
  width: 25px;
  justify-content: center;
}
.mini-row:last-child .pill:not(.both) svg {
  width: 13px;
  height: 13px;
}

/* Extrude dialog */
.dialog {
  position: absolute;
  left: 484px;
  top: 24px;
  width: 394px;
  height: 352px;
  box-sizing: border-box;
  background: #84b1c1;
  border: 1px solid #6a97a8;
  padding: 0 8px 8px;
  display: flex;
  flex-direction: column;
}
.dlg-title {
  height: 36px;
  flex: none;
  position: relative;
  text-align: center;
  font-size: 17px;
  line-height: 36px;
  color: #2c3a40;
}
.dlg-close {
  position: absolute;
  right: -1px;
  top: 0;
  width: 41px;
  height: 26px;
  background: #c75050;
  color: #fff;
  font-size: 13px;
  line-height: 26px;
  font-weight: 700;
}
.dlg-body {
  flex: 1;
  display: flex;
  flex-direction: column;
  min-height: 0;
  background: #f0f0f0;
  border: 1px solid #7b96a0;
  font-size: 12.500px;
  color: #222;
}
.tabs {
  height: 28px;
  flex: none;
  display: flex;
  align-items: flex-end;
  padding-left: 0;
  position: relative;
}
.tab {
  height: 21px;
  width: 44px;
  box-sizing: border-box;
  border: 1px solid #aaa;
  border-bottom: 0;
  padding-left: 4px;
  line-height: 21px;
  background: #f0f0f0;
}
.tab.on {
  width: 51px;
  height: 24px;
  background: #fff;
  border-right: 0;
  margin-bottom: -1px;
  position: relative;
  z-index: 1;
  padding-left: 7px;
  line-height: 21px;
}
.pane {
  height: 215px;
  width: 372px;
  flex: none;
  box-sizing: border-box;
  background: #fff;
  border: 1px solid #a0a0a0;
  border-left: 0;
  padding: 18px 0 0 8px;
  display: flex;
}
.tbtn {
  width: 33px;
  height: 34px;
  box-sizing: border-box;
  flex: none;
  position: relative;
  display: flex;
  align-items: center;
  justify-content: center;
  background: #ececec;
  border: 1px solid #d6d6d6;
}
.tbtn.sel {
  background: #c8e2f8;
  border-color: #3a8fe0;
}
.tbtn svg {
  width: 26px;
  height: 26px;
  flex: none;
}
.pane-left {
  width: 133px;
  flex: none;
  margin-top: 3px;
}
.select-row {
  display: flex;
  align-items: center;
  gap: 14px;
  margin-bottom: 12px;
}
.select-row span {
  padding-top: 1px;
}
.select-row .tbtn svg {
  width: 20px;
  height: 20px;
  margin-top: -6px;
}
.under {
  position: absolute;
  left: 9px;
  bottom: 7px;
  width: 16px;
  height: 2px;
}
.under.blue {
  background: #1a3fe0;
}
.under.pink {
  background: #c020a0;
}
.group {
  margin: 0;
  padding: 0;
  box-sizing: border-box;
  border: 1px solid #dcdcdc;
}
.group legend {
  padding: 0 1px;
  font-size: 12.500px;
  line-height: 14px;
}
.output {
  width: 95px;
  height: 68px;
  margin-top: 17px;
  display: flex;
  gap: 4px;
  padding: 9px 0 0 12px;
}
.pane-mid {
  width: 51px;
  height: 169px;
  flex: none;
  box-sizing: border-box;
  border: 1px solid #dcdcdc;
  padding: 12px 0 0 8px;
  display: flex;
  flex-direction: column;
  gap: 2px;
}
.tbtn.press {
  height: 34px;
}
.iso-btn {
  margin-top: 8px;
}
.pane-right {
  margin-left: 8px;
  width: 160px;
  flex: none;
  margin-top: -6px;
}
.extents {
  height: 140px;
  padding: 10px 0 0 8px;
}
.select-box {
  width: 126px;
  height: 23px;
  box-sizing: border-box;
  background: #e4e4e4;
  border: 1px solid #acacac;
  display: flex;
  align-items: center;
  justify-content: space-between;
  padding: 0 5px 0 3px;
}
.select-box svg {
  width: 10px;
  height: 7px;
}
.distance {
  width: 126px;
  height: 26px;
  margin-top: 12px;
  box-sizing: border-box;
  border: 1px solid #acacac;
  display: flex;
  align-items: center;
  justify-content: space-between;
  padding-left: 5px;
}
.distance b {
  width: 21px;
  height: 24px;
  background: #f0f0f0;
  display: flex;
  align-items: center;
  justify-content: center;
}
.distance svg {
  width: 7px;
  height: 11px;
}
.dirs {
  display: flex;
  gap: 2px;
  margin-top: 10px;
}
.match {
  display: flex;
  align-items: center;
  gap: 3px;
  margin-top: 18px;
  color: #8a8a8a;
}
.match i {
  width: 16px;
  height: 16px;
  box-sizing: border-box;
  background: #e6e6e6;
  border: 1px solid #ccc;
}
.dlg-foot {
  height: 48px;
  flex: none;
  box-sizing: border-box;
  display: flex;
  align-items: center;
  padding: 7px 7px 0 9px;
}
.help-btn {
  width: 26px;
  height: 26px;
  box-sizing: border-box;
  border: 1px solid #aaa;
  background: #e4e4e4;
  display: flex;
  align-items: center;
  justify-content: center;
}
.help-btn svg {
  width: 22px;
  height: 22px;
}
.preview {
  width: 72px;
  height: 30px;
  margin: 0 35px 0 48px;
  box-sizing: border-box;
  border: 1px solid #dcdcdc;
  display: flex;
  align-items: center;
  gap: 5px;
  padding-left: 6px;
}
.check-box {
  width: 16px;
  height: 16px;
  box-sizing: border-box;
  background: #e4e4e4;
  border: 1px solid #bbb;
  display: flex;
}
.check-box svg {
  width: 14px;
  height: 14px;
}
.glasses {
  width: 36px;
  height: 18px;
}
.push {
  width: 86px;
  height: 25px;
  padding: 0;
  box-sizing: border-box;
  border: 1px solid #acacac;
  background: #e4e4e4;
  font-family: inherit;
  font-size: 12.500px;
  color: #222;
}
.ok-btn {
  margin-right: 5px;
}
.dlg-strip {
  flex: 1;
  position: relative;
  border-top: 1px solid #3a8fd0;
}
.dlg-strip i {
  position: absolute;
  left: 183px;
  top: 3px;
  border-left: 5px solid transparent;
  border-right: 5px solid transparent;
  border-bottom: 8px solid #111;
}
</style>
